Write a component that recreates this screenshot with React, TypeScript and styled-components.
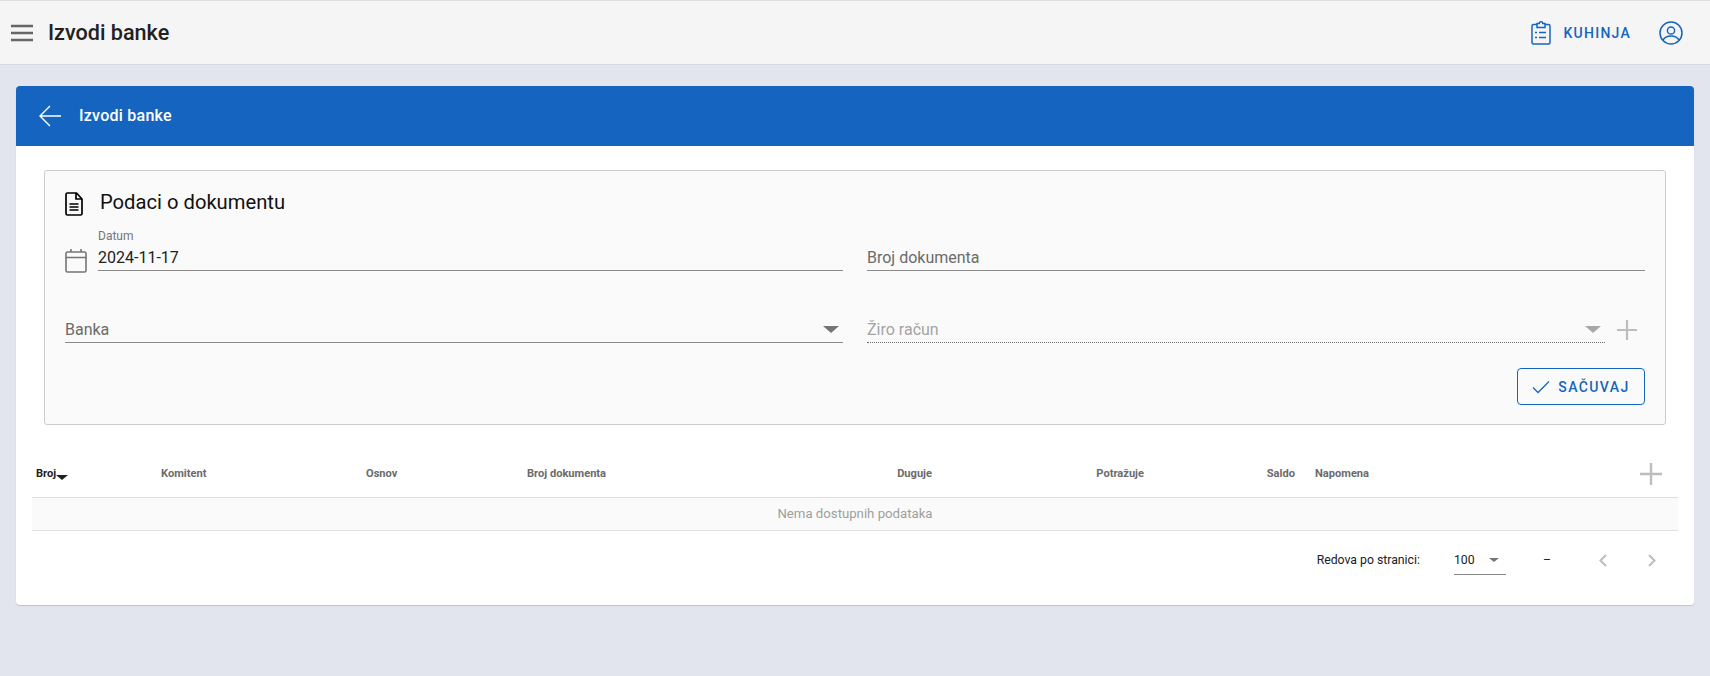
import styled, { createGlobalStyle } from "styled-components";

const Global = createGlobalStyle`
    html, body {
        margin: 0;
        padding: 0;
        background: #e2e5ee;
        font-family: Roboto, "Liberation Sans", sans-serif;
    }
    * {
        box-sizing: border-box;
    }
`;

const blue = "#1565c0";

const Page = styled.div`
    min-height: 676px;
    background: #e2e5ee;
`;
const TopBar = styled.header`
    display: flex;
    align-items: center;
    height: 65px;
    padding: 0 27px 0 11px;
    background: #f5f5f5;
    border-top: 1px solid #e0e0e0;
    border-bottom: 1px solid #d6d9e4;
`;
const TopTitle = styled.h1`
    margin: 0 0 0 15px;
    font-size: 21.6px;
    font-weight: 500;
    color: #212121;
    flex: 1;
`;
const KitchenLink = styled.div`
    display: flex;
    align-items: center;
    gap: 13px;
    margin-right: 28px;
    color: ${blue};
    font-size: 14px;
    font-weight: 500;
    letter-spacing: 1.25px;
`;
const Main = styled.main`
    padding: 21px 16px;
`;
const Card = styled.section`
    height: 519px;
    background: #fff;
    border-radius: 4px;
    box-shadow: 0 1px 1px rgba(0, 0, 0, 0.14);
    overflow: hidden;
`;
const CardHeader = styled.div`
    display: flex;
    align-items: center;
    gap: 18px;
    height: 60px;
    padding-left: 23px;
    background: ${blue};
    color: #fff;
    font-size: 16px;
    font-weight: 500;
    letter-spacing: 0.25px;
`;
const CardTitle = styled.span`
    margin-bottom: 2px;
`;
const Panel = styled.div`
    margin: 24px 28px 0;
    height: 255px;
    padding: 18px 20px 0;
    background: #fafafa;
    border: 1px solid #ccc;
    border-radius: 3px;
`;
const PanelTitle = styled.div`
    display: flex;
    align-items: center;
    gap: 17px;
    height: 28px;
    font-size: 20.2px;
    color: #111;
    svg {
        margin-top: 2px;
    }
`;
const PanelTitleText = styled.span`
    margin-bottom: 2px;
`;
const FormGrid = styled.div`
    display: grid;
    grid-template-columns: 778px 778px;
    column-gap: 24px;
    margin-top: 6px;
`;
const FieldWrap = styled.div`
    display: flex;
    align-items: flex-end;
    gap: 11px;
    height: 48px;
`;
const DateIcon = styled.svg`
    flex: none;
    margin-bottom: -2px;
`;
const Field = styled.div<{ $dotted?: boolean }>`
    position: relative;
    flex: 1;
    display: flex;
    align-items: center;
    justify-content: space-between;
    height: 30px;
    padding: 4px 4px 0 0;
    border-bottom: 1px ${(p) => (p.$dotted ? "dotted #6f6f6f" : "solid #8a8a8a")};
    font-size: 16px;
    color: ${(p) => (p.$dotted ? "#a4a4a4" : "#6b6b6b")};
`;
const FloatLabel = styled.span`
    position: absolute;
    left: 0;
    top: -12px;
    font-size: 12px;
    color: #757575;
`;
const Value = styled.span`
    color: #212121;
`;
const Row2 = styled(FormGrid)`
    margin-top: 24px;
`;
const AddSlot = styled.div`
    display: flex;
    margin: 0 8px 3px 1px;
`;
const ButtonRow = styled.div`
    display: flex;
    justify-content: flex-end;
    margin-top: 25px;
`;
const SaveButton = styled.button`
    display: flex;
    align-items: center;
    justify-content: center;
    gap: 8px;
    width: 128px;
    height: 37px;
    background: transparent;
    border: 1px solid ${blue};
    border-radius: 4px;
    color: ${blue};
    font-family: inherit;
    font-size: 14px;
    font-weight: 500;
    letter-spacing: 1.4px;
`;
const Table = styled.div`
    margin: 24px 16px 0;
`;
const columns = "125px 205px 161px 300px 113px 212px 163px 1fr 56px";
const HeadRow = styled.div`
    display: grid;
    grid-template-columns: ${columns};
    align-items: center;
    height: 48px;
`;
const HeadCell = styled.div<{ $right?: boolean; $active?: boolean; $gap?: boolean }>`
    display: flex;
    justify-content: ${(p) => (p.$right ? "flex-end" : "flex-start")};
    padding: 0 ${(p) => (p.$gap ? "16px" : "4px")} 0 4px;
    font-size: 11.1px;
    font-weight: 700;
    color: ${(p) => (p.$active ? "#212121" : "#6b6b6b")};
`;
const AddCell = styled.div`
    display: flex;
    justify-content: flex-end;
    padding: 2px 16px 0 0;
`;
const EmptyRow = styled.div`
    display: flex;
    align-items: center;
    justify-content: center;
    height: 34px;
    padding-bottom: 2px;
    background: #fafafa;
    border-top: 1px solid #e0e0e0;
    border-bottom: 1px solid #e0e0e0;
    font-size: 13.2px;
    color: #9e9e9e;
`;
const Pager = styled.div`
    display: flex;
    align-items: center;
    justify-content: flex-end;
    height: 58px;
    padding-right: 22px;
    font-size: 12.25px;
    color: #212121;
`;
const PerPage = styled.div`
    display: flex;
    align-items: center;
    justify-content: space-between;
    width: 52px;
    height: 30px;
    margin-left: 34px;
    padding-right: 7px;
    border-bottom: 1px solid #8a8a8a;
`;
const Range = styled.span`
    margin: 0 14px 0 37px;
`;
const PagerIcon = styled.svg<{ $wide?: boolean }>`
    display: block;
    margin-left: ${(p) => (p.$wide ? "41px" : "34px")};
`;
const Caret = styled.span<{ $w: number; $c: string }>`
    display: block;
    width: 0;
    height: 0;
    border-left: ${(p) => p.$w}px solid transparent;
    border-right: ${(p) => p.$w}px solid transparent;
    border-top: ${(p) => p.$w * 0.95}px solid ${(p) => p.$c};
`;
const SortCaret = styled(Caret)`
    margin: 8px 0 0 0;
`;

const Plus = ({ size, color }: { size: number; color: string }) => (
    <svg width={size} height={size} viewBox="0 0 20 20" fill="none" stroke={color} strokeWidth="2.2">
        <path d="M10 0v20M0 10h20" />
    </svg>
);

const leftHeads = ["Komitent", "Osnov", "Broj dokumenta"];

export default function App() {
    return (
        <Page>
            <Global />
            <TopBar>
                <svg width="22" height="18" viewBox="0 0 22 18" fill="none" stroke="#666" strokeWidth="2.4">
                    <path d="M0 2h22M0 9h22M0 16h22" />
                </svg>
                <TopTitle>Izvodi banke</TopTitle>
                <KitchenLink>
                    <svg width="20" height="25" viewBox="0 0 20 25" fill="none" stroke={blue} strokeWidth="1.5">
                        <path d="M6 4.5H2.5A1.5 1.5 0 0 0 1 6v16.5A1.5 1.5 0 0 0 2.5 24h15a1.5 1.5 0 0 0 1.5-1.5V6a1.5 1.5 0 0 0-1.5-1.5H14" />
                        <path d="M6 7.5v-4h2.2a1.8 1.8 0 0 1 3.6 0H14v4z" />
                        <path d="M8 12.5h7M8 17.5h7M4 12.5h2M4 17.5h2" />
                    </svg>
                    KUHINJA
                </KitchenLink>
                <svg width="24" height="24" viewBox="0 0 24 24" fill="none" stroke={blue} strokeWidth="1.5">
                    <circle cx="12" cy="12" r="11" />
                    <circle cx="12" cy="9.5" r="3.6" />
                    <path d="M3.8 19.5c1.5-3 4.5-4.5 8.2-4.5s6.7 1.5 8.2 4.5" />
                </svg>
            </TopBar>
            <Main>
                <Card>
                    <CardHeader>
                        <svg width="22" height="22" viewBox="0 0 22 22" fill="none" stroke="#fff" strokeWidth="1.4">
                            <path d="M22 11H1M11 1 1 11l10 10" />
                        </svg>
                        <CardTitle>Izvodi banke</CardTitle>
                    </CardHeader>
                    <Panel>
                        <PanelTitle>
                            <svg width="18" height="24" viewBox="0 0 18 24" fill="none" stroke="#000" strokeWidth="1.7">
                                <path d="M2.5 1h9L17 7v14.5a1.5 1.5 0 0 1-1.5 1.5h-13A1.5 1.5 0 0 1 1 21.5v-19A1.5 1.5 0 0 1 2.5 1z" />
                                <path d="M11 1v6h6M4.5 12h9M4.5 15h9M4.5 18h9" />
                            </svg>
                            <PanelTitleText>Podaci o dokumentu</PanelTitleText>
                        </PanelTitle>
                        <FormGrid>
                            <FieldWrap>
                                <DateIcon width="22" height="24" viewBox="0 0 22 24" fill="none" stroke="#757575" strokeWidth="1.6">
                                    <rect x="1" y="3" width="20" height="20" rx="1.5" />
                                    <path d="M1 8.5h20M6 0v3M16 0v3" />
                                </DateIcon>
                                <Field>
                                    <FloatLabel>Datum</FloatLabel>
                                    <Value>2024-11-17</Value>
                                </Field>
                            </FieldWrap>
                            <FieldWrap>
                                <Field>Broj dokumenta</Field>
                            </FieldWrap>
                        </FormGrid>
                        <Row2>
                            <FieldWrap>
                                <Field>
                                    Banka
                                    <Caret $w={8} $c="#757575" />
                                </Field>
                            </FieldWrap>
                            <FieldWrap>
                                <Field $dotted>
                                    Žiro račun
                                    <Caret $w={8} $c="#a8a8a8" />
                                </Field>
                                <AddSlot>
                                    <Plus size={20} color="#bdbdbd" />
                                </AddSlot>
                            </FieldWrap>
                        </Row2>
                        <ButtonRow>
                            <SaveButton>
                                <svg width="18" height="14" viewBox="0 0 18 14" fill="none" stroke={blue} strokeWidth="1.3">
                                    <path d="M1 7.5 6 12.5 17 1.5" />
                                </svg>
                                SAČUVAJ
                            </SaveButton>
                        </ButtonRow>
                    </Panel>
                    <Table>
                        <HeadRow>
                            <HeadCell $active>
                                Broj
                                <SortCaret $w={6} $c="#212121" />
                            </HeadCell>
                            {leftHeads.map((h) => (
                                <HeadCell key={h}>{h}</HeadCell>
                            ))}
                            <HeadCell $right>Duguje</HeadCell>
                            <HeadCell $right>Potražuje</HeadCell>
                            <HeadCell $right $gap>Saldo</HeadCell>
                            <HeadCell>Napomena</HeadCell>
                            <AddCell>
                                <Plus size={22} color="#bdbdbd" />
                            </AddCell>
                        </HeadRow>
                        <EmptyRow>Nema dostupnih podataka</EmptyRow>
                        <Pager>
                            Redova po stranici:
                            <PerPage>
                                100
                                <Caret $w={5} $c="#757575" />
                            </PerPage>
                            <Range>–</Range>
                            <PagerIcon width="8" height="13" viewBox="0 0 8 13" fill="none" stroke="#bdbdbd" strokeWidth="2">
                                <path d="M7 1 1.5 6.5 7 12" />
                            </PagerIcon>
                            <PagerIcon $wide width="8" height="13" viewBox="0 0 8 13" fill="none" stroke="#bdbdbd" strokeWidth="2">
                                <path d="M1 1l5.5 5.5L1 12" />
                            </PagerIcon>
                        </Pager>
                    </Table>
                </Card>
            </Main>
        </Page>
    );
}
